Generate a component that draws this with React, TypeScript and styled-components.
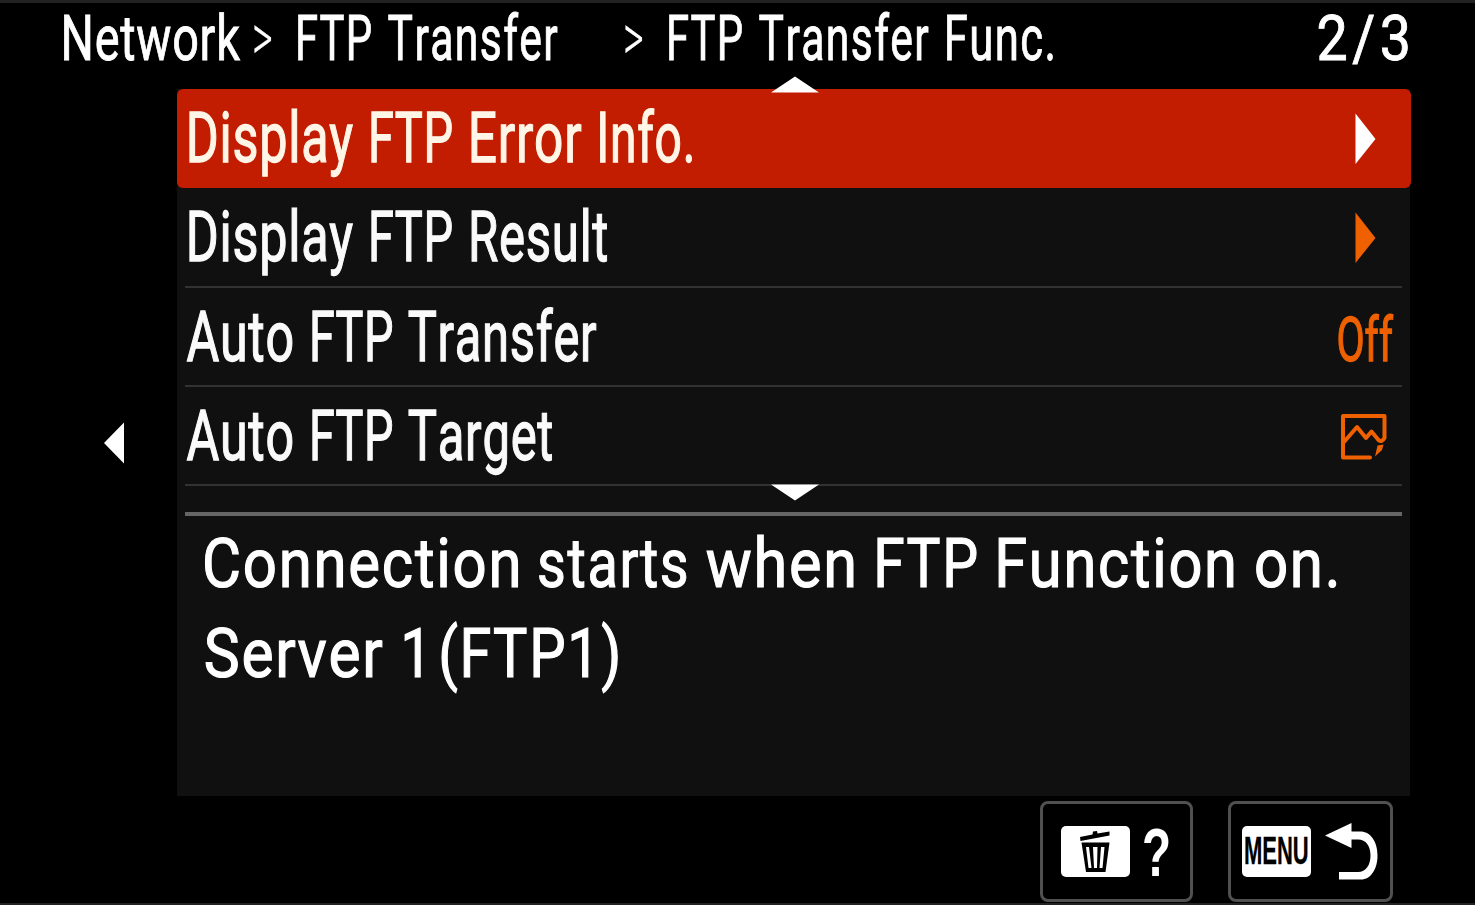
import React from 'react';
import styled, { createGlobalStyle } from 'styled-components';

const FAMILY = 'Roboto, "Liberation Sans", sans-serif';
const KEY_FAMILY = '"Liberation Sans", Arial, sans-serif';

const GlobalStyle = createGlobalStyle`
  * { box-sizing: border-box; }
  html, body { margin: 0; background: #000; }
  body { font-family: ${FAMILY}; color: #fff; overflow: hidden; }
`;

const Screen = styled.div`
  width: 1475px;
  height: 905px;
  background: #000;
  border-top: 3px solid #222;
  border-bottom: 2px solid #222;
  display: flex;
  flex-direction: column;
`;

const Header = styled.header`
  height: 86px;
  padding: 0 66px 0 63px;
  display: flex;
`;

const Crumbs = styled.nav`
  flex: 1;
  display: flex;
`;

const Gap = styled.span<{ $w: number }>`
  flex: 0 0 ${(p) => p.$w}px;
`;

const Line = styled.div`
  display: flex;
`;

const TextBox = styled.span<{ $w: number; $h: number; $gap: number }>`
  display: block;
  flex: none;
  width: ${(p) => p.$w}px;
  height: ${(p) => p.$h}px;
  margin-left: ${(p) => p.$gap}px;
`;

const TextRun = styled.span<{
  $size: number;
  $weight: number;
  $h: number;
  $ls: number;
  $stroke: number;
  $family: string;
}>`
  display: block;
  width: max-content;
  white-space: pre;
  font-family: ${(p) => p.$family};
  font-size: ${(p) => p.$size}px;
  font-weight: ${(p) => p.$weight};
  font-kerning: none;
  line-height: ${(p) => p.$h}px;
  letter-spacing: ${(p) => p.$ls}px;
  -webkit-text-stroke: ${(p) => p.$stroke}px currentColor;
  transform-origin: 0 0;
`;

type TextStyle = {
  size: number;
  height: number;
  weight?: number;
  ls?: number;
  stroke?: number;
  family?: string;
};

type CondensedProps = TextStyle & { text: string; width: number; gap?: number };

/* Squeezes a piece of text so that its glyphs span exactly the given width. */
function Condensed({
  text,
  width,
  size,
  height,
  weight = 400,
  ls = 0,
  stroke = 1.3,
  family = FAMILY,
  gap = 0,
}: CondensedProps) {
  const transform = React.useMemo(() => {
    const ctx = document.createElement('canvas').getContext('2d')!;
    ctx.font = `${weight} ${size}px ${family}`;
    ctx.fontKerning = 'none';
    const m = ctx.measureText(text);
    const left = -m.actualBoundingBoxLeft - stroke / 2;
    const right = m.actualBoundingBoxRight + ls * (text.length - 1) + stroke / 2;
    return `translateX(1px) scaleX(${(width - 1.5) / (right - left)}) translateX(${-left}px)`;
  }, [text, width, size, weight, ls, stroke, family]);
  return (
    <TextBox $w={width} $h={height} $gap={gap}>
      <TextRun
        $size={size}
        $weight={weight}
        $h={height}
        $ls={ls}
        $stroke={stroke}
        $family={family}
        style={{ transform }}
      >
        {text}
      </TextRun>
    </TextBox>
  );
}

/* [word, width, space before it] */
type Word = [string, number, number?];

function Phrase({ words, ...style }: TextStyle & { words: Word[] }) {
  return (
    <Line>
      {words.map(([text, width, gap], i) => (
        <Condensed key={i} text={text} width={width} gap={gap} {...style} />
      ))}
    </Line>
  );
}

const Body = styled.main`
  display: flex;
  height: 707px;
`;

const Side = styled.div`
  width: 177px;
  padding: 333px 0 0 104px;
  svg { display: block; }
`;

const Panel = styled.section`
  position: relative;
  width: 1234px;
  margin-right: -1px;
`;

const Backdrop = styled.div`
  width: 1233px;
  height: 707px;
  background: #101010;
`;

const Row = styled.div<{ $selected?: boolean; $inset?: number }>`
  width: ${(p) => (p.$selected ? 1234 : 1217)}px;
  height: 99px;
  margin-left: ${(p) => (p.$selected ? 0 : 8)}px;
  margin-bottom: ${(p) => (p.$selected ? 1 : 0)}px;
  padding-left: ${(p) => p.$inset}px;
  display: flex;
  justify-content: space-between;
  border-radius: ${(p) => (p.$selected ? 6 : 0)}px;
  background: ${(p) => (p.$selected ? '#c21d00' : 'transparent')};
  border-bottom: ${(p) => (p.$selected ? 'none' : '2px solid #323232')};
  color: ${(p) => (p.$selected ? '#fff6e8' : '#fafafa')};
`;

const Value = styled.span<{ $right: number; $top: number }>`
  padding: ${(p) => p.$top}px ${(p) => p.$right}px 0 0;
  color: #ee6000;
  svg { display: block; }
`;

const Rule = styled.div`
  width: 1217px;
  height: 4px;
  margin: 26px 0 0 8px;
  background: #666;
`;

const Description = styled.div`
  padding: 2px 0 0 26.5px;
`;

const Scroll = styled.svg<{ $top: number }>`
  position: absolute;
  left: 593px;
  top: ${(p) => p.$top}px;
`;

const Footer = styled.footer`
  height: 107px;
  padding: 5px 82px 0 0;
  display: flex;
  justify-content: flex-end;
  gap: 35px;
`;

const Button = styled.div<{ $w: number; $left: number }>`
  width: ${(p) => p.$w}px;
  height: 101px;
  padding: 22px 0 0 ${(p) => p.$left}px;
  border: 3px solid #505050;
  border-radius: 8px;
  display: flex;
`;

const Key = styled.span`
  flex: none;
  width: 69px;
  height: 51px;
  border-radius: 5px;
  background: #fff;
  color: #000;
  display: flex;
  justify-content: center;
`;

const Next = ({ color }: { color: string }) => (
  <svg width="21" height="52" viewBox="0 0 21 52"><path d="M0.500 0.500L20.500 26L0.500 51Z" fill={color} /></svg>
);

const PhotoIcon = () => (
  <svg width="48" height="48" viewBox="0 0 48 48" fill="none" stroke="#ee6000" strokeWidth="4" strokeLinejoin="round">
    <path d="M30 44.500H3V3H44.500V25Q42 29.500 38.500 27L31.500 18.500L26 25L17 14L3.500 29.500" strokeLinecap="round" />
    <path d="M43.500 31.500L42 37L35 43.500L36.500 37L37.500 32.500Z" fill="#ee6000" stroke="none" />
  </svg>
);

const TrashIcon = () => (
  <svg width="32" height="51" viewBox="0 0 32 51">
    <path d="M1 11L13.500 8.500L14 5.500L18 5L18.500 7.500L30.500 5.500V9.500L1.500 15Z" fill="#000" />
    <path d="M2.500 16.500H30.500L26.500 46H7Z" fill="#000" />
    <path d="M7 21H10L12.500 42H9.500ZM14 21H18.500L18 42H15ZM22 21H25.500L23.500 42H20.500Z" fill="#fff" />
  </svg>
);

const ReturnArrow = styled.svg`
  flex: none;
  margin-top: -3px;
`;

const ReturnIcon = () => (
  <ReturnArrow width="54" height="58" viewBox="0 0 54 58">
    <path d="M0 12.500L26.500 0V8.500H35C46 8.500 52.500 19 52.500 32.500C52.500 46 46 56.500 36 56.500H14V49H33C41 49 45.500 42 45.500 32.500C45.500 23 41 16.500 33 16.500H26.500V25Z" fill="#fff" />
  </ReturnArrow>
);

const HEAD: TextStyle = { size: 62.5, height: 71, ls: 2, stroke: 0.9 };
const ITEM: TextStyle = { size: 70, height: 99, ls: 1 };
const INFO: TextStyle = { size: 69, height: 90, ls: 2, stroke: 1.2 };
const CHEVRON: TextStyle = { size: 64, height: 71, weight: 300, stroke: 0.4 };

export default function App() {
  return (
    <>
      <GlobalStyle />
      <Screen>
        <Header>
          <Crumbs>
            <Condensed text="Network" width={178} {...HEAD} ls={1} />
            <Gap $w={12} />
            <Condensed text=">" width={19} {...CHEVRON} />
            <Gap $w={25} />
            <Phrase {...HEAD} words={[['FTP', 75], ['Transfer', 171.5, 14.5]]} />
            <Gap $w={66} />
            <Condensed text=">" width={19} {...CHEVRON} />
            <Gap $w={25} />
            <Phrase {...HEAD} words={[['FTP', 75], ['Transfer', 171.5, 14.7], ['Func.', 107.8, 17.3]]} />
          </Crumbs>
          <Condensed text="2/3" width={92} {...HEAD} ls={5} />
        </Header>
        <Body>
          <Side>
            <svg width="21" height="42" viewBox="0 0 21 42"><path d="M20 0.500V41.500L0 21Z" fill="#fff" /></svg>
          </Side>
          <Panel>
            <Backdrop>
              <Row $selected $inset={10.7}>
                <Phrase {...ITEM} words={[['Display', 166], ['FTP', 82.5, 16.3], ['Error', 112, 17.2], ['Info.', 93.5, 17]]} />
                <Value $right={35} $top={24}><Next color="#fff" /></Value>
              </Row>
              <Row $inset={2.7}>
                <Phrase {...ITEM} height={97} words={[['Display', 166], ['FTP', 82.5, 16.3], ['Result', 138, 17.2]]} />
                <Value $right={26} $top={23}><Next color="#ee6000" /></Value>
              </Row>
              <Row $inset={0}>
                <Phrase {...ITEM} height={98} words={[['Auto', 108], ['FTP', 82, 17.5], ['Transfer', 190, 14]]} />
                <Value $right={8} $top={0}><Condensed text="Off" width={57.5} size={61} height={104} /></Value>
              </Row>
              <Row $inset={0}>
                <Phrase {...ITEM} height={98} words={[['Auto', 108], ['FTP', 82, 17.5], ['Target', 146, 14]]} />
                <Value $right={14} $top={26}><PhotoIcon /></Value>
              </Row>
              <Rule />
              <Description>
                <Phrase
                  {...INFO}
                  height={91}
                  words={[['Connection', 315], ['starts', 149.5, 19.7], ['when', 149.5, 17], ['FTP', 101, 21.5], ['Function', 237.5, 20], ['on.', 82, 20.5]]}
                />
                <Phrase {...INFO} height={89} words={[['Server', 179.5], ['1', 18.5, 20], ['(FTP1)', 179, 18]]} />
              </Description>
            </Backdrop>
            <Scroll $top={-13} width="50" height="17" viewBox="0 0 50 17"><path d="M25 0.500L49 16.500H1Z" fill="#fff" /></Scroll>
            <Scroll $top={395} width="50" height="17" viewBox="0 0 50 17"><path d="M25 16.500L49 0.500H1Z" fill="#fff" /></Scroll>
          </Panel>
        </Body>
        <Footer>
          <Button $w={153} $left={17.5}>
            <Key><TrashIcon /></Key>
            <Gap $w={13} />
            <Condensed text="?" width={26} size={68} height={53} weight={700} stroke={0} family={KEY_FAMILY} />
          </Button>
          <Button $w={165} $left={11}>
            <Key><Condensed text="MENU" width={64.5} size={38} height={51} weight={700} stroke={0.3} family={KEY_FAMILY} /></Key>
            <Gap $w={14} />
            <ReturnIcon />
          </Button>
        </Footer>
      </Screen>
    </>
  );
}
